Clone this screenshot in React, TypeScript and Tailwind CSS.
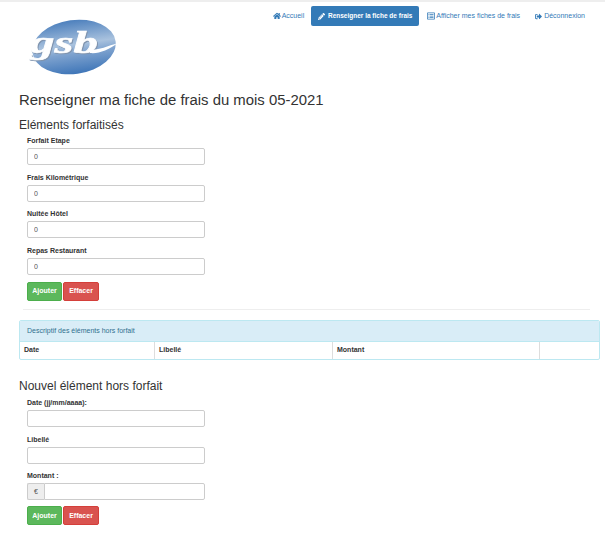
import { FaHome, FaPencilAlt, FaRegListAlt, FaSignOutAlt } from "react-icons/fa";

function Logo() {
  return (
    <svg width="92" height="58" viewBox="0 0 92 58" className="block">
      <defs>
        <linearGradient id="gsbBlue" x1="0" y1="0" x2="0" y2="1">
          <stop offset="0" stopColor="#4d80bd" />
          <stop offset="0.45" stopColor="#a9c2de" />
          <stop offset="0.62" stopColor="#7fa3cf" />
          <stop offset="1" stopColor="#3f76b8" />
        </linearGradient>
      </defs>
      <ellipse cx="46" cy="28" rx="42" ry="27" transform="rotate(-8 46 28)" fill="url(#gsbBlue)" />
      <text
        x="2"
        y="34"
        fill="#ffffff"
        stroke="#ffffff"
        strokeWidth="0.6"
        fontFamily="'Liberation Serif', serif"
        fontSize="32"
        fontStyle="italic"
        fontWeight="700"
        textLength="68"
        lengthAdjust="spacingAndGlyphs"
        className="drop-shadow-[1px_1px_0_#7f93ad]"
      >
        gsb
      </text>
      <path d="M62 31 C71 31 80 27 90 24 C80 31 71 35 62 34 Z" fill="#ffffff" />
    </svg>
  );
}

function Field({ label, value }: { label: string; value?: string }) {
  return (
    <div className="mb-[5.67px]">
      <label className="block h-[14px] text-[7px] leading-[14px] font-bold text-[#333333]">{label}</label>
      <input
        readOnly
        value={value ?? ""}
        className="block h-[17px] w-[178px] rounded-[2px] border border-[#cccccc] bg-white px-[6px] text-[7px] text-[#555555] outline-none"
      />
    </div>
  );
}

function Buttons() {
  return (
    <div className="flex gap-px">
      <button className="h-[19px] w-[35px] rounded-[2px] border border-[#4cae4c] bg-[#5cb85c] text-[7px] font-bold text-white">Ajouter</button>
      <button className="h-[19px] w-[36px] rounded-[2px] border border-[#d43f3a] bg-[#d9534f] text-[7px] font-bold text-white">Effacer</button>
    </div>
  );
}

export default function App() {
  return (
    <div className="h-[546px] w-[605px] overflow-hidden bg-white font-['Liberation_Sans',sans-serif] text-[#333333]">
      <div className="h-[2px] bg-[#eeeeee]" />

      <nav className="mt-[4px] flex h-[20px] items-center justify-end pr-[20px] text-[7px] text-[#337ab7]">
        <a className="flex items-center gap-[1px]">
          <FaHome className="h-[8px] w-[8px]" />
          Accueil
        </a>
        <a className="ml-[7px] flex h-[20px] w-[108px] items-center justify-center gap-[3px] rounded-[2px] bg-[#337ab7] text-[6.5px] font-bold text-white">
          <FaPencilAlt className="h-[7px] w-[7px]" />
          Renseigner la fiche de frais
        </a>
        <a className="ml-[8px] flex items-center gap-[1px]">
          <FaRegListAlt className="h-[8px] w-[8px]" />
          Afficher mes fiches de frais
        </a>
        <a className="ml-[15px] flex items-center gap-[2px]">
          <FaSignOutAlt className="h-[7px] w-[7px]" />
          Déconnexion
        </a>
      </nav>

      <div className="-mt-[7px] ml-[28px]">
        <Logo />
      </div>

      <main className="pl-[19px] pr-[5px]">
        <h1 className="mt-[14px] text-[14.9px] leading-[18px] font-normal text-[#333333]">
          Renseigner ma fiche de frais du mois 05-2021
        </h1>
        <h2 className="mt-[8px] text-[12px] leading-[16px] font-normal">Eléments forfaitisés</h2>

        <form className="mt-[1px] pl-[8px]">
          <Field label="Forfait Etape" value="0" />
          <Field label="Frais Kilométrique" value="0" />
          <Field label="Nuitée Hôtel" value="0" />
          <Field label="Repas Restaurant" value="0" />
          <div className="mt-[7px]">
            <Buttons />
          </div>
        </form>

        <hr className="mt-[8px] ml-[4px] mr-[10px] border-[#eeeeee]" />

        <div className="mt-[10px] overflow-hidden rounded-[2px] border border-[#bce8f1]">
          <div className="flex h-[20px] items-center bg-[#d9edf7] px-[7px] text-[7px] text-[#31708f]">
            Descriptif des éléments hors forfait
          </div>
          <div className="grid h-[18px] grid-cols-[135px_178px_207px_1fr] border-t border-[#bce8f1] text-[7px] font-bold">
            <div className="flex items-center border-r border-[#dddddd] pl-[4px]">Date</div>
            <div className="flex items-center border-r border-[#dddddd] pl-[4px]">Libellé</div>
            <div className="flex items-center border-r border-[#dddddd] pl-[4px]">Montant</div>
            <div />
          </div>
        </div>

        <h2 className="mt-[18px] text-[12px] leading-[16px] font-normal">Nouvel élément hors forfait</h2>

        <form className="mt-[2px] pl-[8px]">
          <Field label="Date (jj/mm/aaaa):" />
          <Field label="Libellé" />
          <div className="mb-[5.67px]">
            <label className="block h-[14px] text-[7px] leading-[14px] font-bold">Montant :</label>
            <div className="flex h-[17px] w-[178px]">
              <span className="flex w-[17px] items-center justify-center rounded-l-[2px] border border-r-0 border-[#cccccc] bg-[#eeeeee] text-[7px] text-[#555555]">€</span>
              <input readOnly className="h-full min-w-0 flex-1 rounded-r-[2px] border border-[#cccccc] bg-white outline-none" />
            </div>
          </div>
          <div className="mt-[6px]">
            <Buttons />
          </div>
        </form>
      </main>
    </div>
  );
}
